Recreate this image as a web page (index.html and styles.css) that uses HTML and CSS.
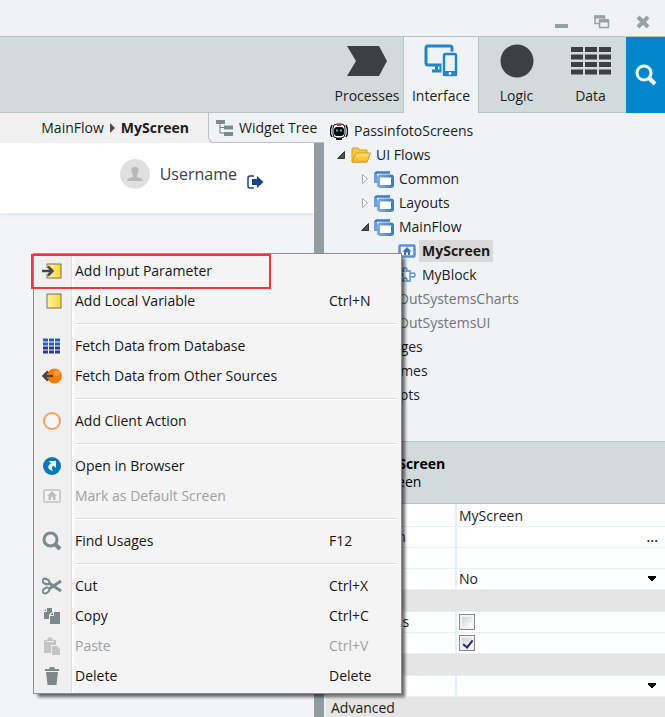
FILE: index.html
```html
<!DOCTYPE html>
<html lang="en">
<head>
<meta charset="utf-8">
<title>PassinfotoScreens</title>
<link rel="stylesheet" href="styles.css">
</head>
<body>
<svg class="defs" aria-hidden="true">
  <defs>
    <linearGradient id="blue" x1="0" x2="1" y1="0" y2="0"><stop offset="0" stop-color="#7aabe6"/><stop offset="1" stop-color="#427bc9"/></linearGradient>
    <linearGradient id="yellow" x1="0" x2="1" y1="0" y2="0"><stop offset="0" stop-color="#fff1ab"/><stop offset="1" stop-color="#fbd72d"/></linearGradient>
    <linearGradient id="folder" x1="0" x2="0" y1="0" y2="1"><stop offset="0" stop-color="#ffe27a"/><stop offset="1" stop-color="#f5b820"/></linearGradient>
    <symbol id="flow" viewBox="0 0 20 17">
      <path d="M1.500 12V3Q1.500 1.500 3 1.500H16" fill="none" stroke="#3a7cc6" stroke-width="2.500"/>
      <path d="M1.500 12V3" stroke="#6b9de0" stroke-width="3"/>
      <rect x="4.500" y="5" width="14" height="10.500" rx="1.500" fill="#fff" stroke="url(#blue)" stroke-width="3"/>
    </symbol>
    <symbol id="open" viewBox="0 0 8 8"><path d="M7.500 0.500V7.500H0.500Z" fill="#505050" stroke="#333"/></symbol>
    <symbol id="closed" viewBox="0 0 8 10"><path d="M1.500 0.500L6.500 5L1.500 9.500Z" fill="#fff" stroke="#a6a6a6"/></symbol>
  </defs>
</svg>

<header>
  <div class="titlebar">
    <button aria-label="Minimize"><svg width="14" height="14"><rect x="1" y="9" width="13" height="4" fill="#95a1a5"/></svg></button>
    <button aria-label="Restore"><svg width="16" height="14" fill="none" stroke="#95a1a5" stroke-width="1.500"><path d="M5 8.500H1V1H10.500V4"/><path d="M0 2H11M5 6H15" stroke-width="3"/><rect x="5.500" y="5" width="9" height="7.500"/></svg></button>
    <button aria-label="Close"><svg width="14" height="14"><path d="M2 2L12 12M12 2L2 12" stroke="#95a1a5" stroke-width="4"/></svg></button>
  </div>
  <nav class="toolbar">
    <button class="tab"><svg width="40" height="34"><path d="M0 2H32L40 17L32 32H0L9 17Z" fill="#394143"/></svg><span>Processes</span></button>
    <button class="tab active"><svg width="34" height="34" fill="none" stroke="#2384c6"><rect x="2" y="2" width="26" height="19" rx="2" stroke-width="3"/><path d="M12.500 22V26M17 22V26" stroke-width="3"/><path d="M8 27H19" stroke-width="3"/><rect x="20" y="10" width="12" height="21" rx="2" fill="#eff3f6" stroke="#eff3f6" stroke-width="5"/><rect x="20" y="10" width="12" height="21" rx="1.500" stroke-width="2.500"/><path d="M19 29.500H33" stroke-width="5"/><circle cx="26" cy="29.500" r="1" fill="#fff" stroke="#fff"/></svg><span>Interface</span></button>
    <button class="tab"><svg width="34" height="34"><circle cx="17" cy="17" r="16.500" fill="#394143"/></svg><span>Logic</span></button>
    <button class="tab"><svg width="40" height="34" stroke="#394143" stroke-width="5" stroke-dasharray="12 2"><path d="M0 5.500H40M0 13H40M0 20.500H40M0 28H40"/></svg><span>Data</span></button>
    <button class="search" aria-label="Search"><svg width="22" height="22" fill="none" stroke="#fff"><circle cx="9" cy="9" r="7" stroke-width="3"/><path d="M14 14L20 20" stroke-width="4"/></svg></button>
  </nav>
</header>

<main>
  <section class="editor">
    <div class="crumbs">
      <div class="path"><a href="#">MainFlow</a><svg width="5" height="10"><path d="M0 0L5 5L0 10Z" fill="#4c4c4c"/></svg><strong>MyScreen</strong></div>
      <button class="widgets"><svg width="17" height="18"><path d="M4 3V14H9M4 8.500H9" fill="none" stroke="#6f7d80"/><path d="M0 3H9M8 8.500H17M8 15H17" stroke="#7d8b8f" stroke-width="4"/></svg>Widget Tree</button>
    </div>
    <div class="canvas">
      <div class="page">
        <div class="userbar">
          <svg width="30" height="30"><circle cx="15" cy="15" r="15" fill="#e0e0e0"/><path d="M15 8C18 8 19 10 18.500 12.500Q18 15 17 16V18Q23 19 23 22H7Q7 19 13 18V16Q12 15 11.500 12.500C11 10 12 8 15 8Z" fill="#b8b8b8"/></svg>
          <span>Username</span>
          <button aria-label="Log out"><svg width="17" height="14"><path d="M7 1H3Q1 1 1 3V11Q1 13 3 13H7" fill="none" stroke="#1e4485" stroke-width="1.500"/><path d="M5 4H10V1L16.500 7L10 13V10H5Z" fill="#1e4485"/></svg></button>
        </div>
      </div>
    </div>
  </section>

  <aside>
    <div class="tree" role="tree">
      <div class="node root" role="treeitem"><svg width="18" height="18"><path d="M2 3L0.500 7V12L2 15M16 3L17.500 7V12L16 15" fill="none" stroke="#111" stroke-width="1.500"/><rect x="3" y="2" width="12" height="14" rx="4" fill="#fff" stroke="#111"/><rect x="4" y="5" width="10" height="9" rx="3" fill="#050505"/><path d="M7 2H11V4H7Z" fill="#e22d36"/><path d="M6 8.500H8M10 8.500H12" stroke="#24bed4" stroke-width="2"/><path d="M6 17H12" stroke="#111" stroke-width="2"/></svg><span>PassinfotoScreens</span></div>
      <div class="node l1" role="treeitem"><svg width="8" height="8"><use href="#open"/></svg><svg class="pic" width="20" height="16"><path d="M1 15V2Q1 1 2 1H7L9 3H16V15Z" fill="#f8cc42" stroke="#d79b1c"/><path d="M1 15L5 6H19.500L16 15Z" fill="url(#folder)" stroke="#d79b1c"/></svg><span>UI Flows</span></div>
      <div class="node l2" role="treeitem"><svg width="8" height="10"><use href="#closed"/></svg><svg class="pic" width="20" height="17"><use href="#flow"/></svg><span>Common</span></div>
      <div class="node l2" role="treeitem"><svg width="8" height="10"><use href="#closed"/></svg><svg class="pic" width="20" height="17"><use href="#flow"/></svg><span>Layouts</span></div>
      <div class="node l2" role="treeitem"><svg width="8" height="8"><use href="#open"/></svg><svg class="pic" width="20" height="17"><use href="#flow"/></svg><span>MainFlow</span></div>
      <div class="node l3" role="treeitem"><svg width="18" height="14"><rect x="1.500" y="1.500" width="15" height="11" rx="1" fill="#f4f8fd" stroke="#5b90d6" stroke-width="2.500"/><path d="M9 3L13.500 7.500H12V11H10V8.500H8V11H6V7.500H4.500Z" fill="#3c72c4"/></svg><span class="selected">MyScreen</span></div>
      <div class="node l3" role="treeitem"><svg width="18" height="16"><path d="M2 4H6Q4 1 7 1Q10 1 8.500 4H12V7Q17 4.500 17 8Q17 11.500 12 9V14H8.500Q10 11 7 11Q4 11 6 14H2V10Q5 10 5 8Q5 6 2 6Z" fill="#fff" stroke="#5590dc" stroke-width="1.500"/></svg><span class="label">MyBlock</span></div>
      <div class="node l2 muted leaf" role="treeitem"><span>OutSystemsCharts</span></div>
      <div class="node l2 muted leaf" role="treeitem"><span>OutSystemsUI</span></div>
      <div class="node branch" role="treeitem"><span>Images</span></div>
      <div class="node branch" role="treeitem"><span>Themes</span></div>
      <div class="node branch" role="treeitem"><span>Scripts</span></div>
    </div>
    <div class="propshead"><strong>MyScreen</strong><span>Screen</span></div>
    <table class="props">
      <tr><th></th><td><input type="text" value="MyScreen" aria-label="Name"></td></tr>
      <tr><th>Description</th><td class="end"><button aria-label="Edit description">...</button></td></tr>
      <tr><th></th><td><input type="text" aria-label="Title"></td></tr>
      <tr><th></th><td><select aria-label="Public"><option>No</option><option>Yes</option></select></td></tr>
      <tr class="group"><th colspan="2"></th></tr>
      <tr><th><label for="anon">Anonymous</label></th><td><input id="anon" type="checkbox"></td></tr>
      <tr><th></th><td><input type="checkbox" checked aria-label="Registered"></td></tr>
      <tr class="group"><th colspan="2"></th></tr>
      <tr><th></th><td><select aria-label="Initialize"><option></option></select></td></tr>
      <tr class="group"><th colspan="2">Advanced</th></tr>
    </table>
  </aside>

  <div class="menu" role="menu">
    <button role="menuitem" class="marked"><svg width="20" height="18"><rect x="5" y="2" width="14" height="14" fill="url(#yellow)" stroke="#77705c"/><path d="M0 9H7" stroke="#f0f0f0" stroke-width="6"/><path d="M0 9H9M6 4.500L10.500 9L6 13.500" fill="none" stroke="#4b4443" stroke-width="2.500"/></svg><span>Add Input Parameter</span></button>
    <button role="menuitem"><svg width="20" height="18"><rect x="5" y="2" width="14" height="14" fill="url(#yellow)" stroke="#77705c"/></svg><span>Add Local Variable</span><kbd>Ctrl+N</kbd></button>
    <hr>
    <button role="menuitem"><svg width="20" height="18" stroke-width="3" stroke-dasharray="5 1"><path d="M1 3H19M1 7H19" stroke="#2862b8"/><path d="M1 11H19M1 15H19" stroke="#2f359c"/></svg><span>Fetch Data from Database</span></button>
    <button role="menuitem"><svg width="20" height="18"><circle cx="12.500" cy="9" r="7.500" fill="#f77d0d"/><circle cx="15" cy="6" r="3" fill="#ffa64c" opacity=".6"/><path d="M11 9H2M6 4.500L1.500 9L6 13.500" fill="none" stroke="#4b4443" stroke-width="2.500"/></svg><span>Fetch Data from Other Sources</span></button>
    <hr>
    <button role="menuitem"><svg width="20" height="20"><circle cx="10" cy="10" r="8" fill="#f7f7f7" stroke="#f1a35d" stroke-width="2"/></svg><span>Add Client Action</span></button>
    <hr>
    <button role="menuitem"><svg width="20" height="20"><circle cx="10" cy="10" r="9" fill="#0878ba"/><path d="M7 5H14V12L11.500 9.500Q8.500 11 11 15Q5 13 6.500 10Q7 8.500 9 7.500Z" fill="#fff"/></svg><span>Open in Browser</span></button>
    <button role="menuitem" disabled><svg width="20" height="18"><rect x="2" y="3" width="16" height="12" rx="1" fill="#f4f4f4" stroke="#cdcdcd" stroke-width="2"/><path d="M10 4L15 9H13.500V13H11V10H9V13H6.500V9H5Z" fill="#bdbdbd"/></svg><span>Mark as Default Screen</span></button>
    <hr>
    <button role="menuitem"><svg width="20" height="20" fill="none" stroke="#7b898c"><circle cx="8.500" cy="8.500" r="6.500" stroke-width="3"/><path d="M13 13L18 18" stroke-width="4"/></svg><span>Find Usages</span><kbd>F12</kbd></button>
    <hr>
    <button role="menuitem"><svg width="20" height="18" fill="none" stroke="#7b898c" stroke-width="2"><ellipse cx="4" cy="4.500" rx="3.500" ry="2.500" transform="rotate(25 4 4.500)"/><ellipse cx="4" cy="13.500" rx="3.500" ry="2.500" transform="rotate(-35 4 13.500)"/><path d="M7 6L19 14M7 12L19 4" stroke-width="3"/></svg><span>Cut</span><kbd>Ctrl+X</kbd></button>
    <button role="menuitem"><svg width="20" height="18" fill="#7b898c"><path d="M5 1H10V6H8V12H2V5H5ZM2 4L4 2V4Z"/><path d="M12 5H18V17H8V9H12ZM8 8L11 5V8Z"/><path d="M7.500 13V8L11.500 4" fill="none" stroke="#f0f0f0"/></svg><span>Copy</span><kbd>Ctrl+C</kbd></button>
    <button role="menuitem" disabled><svg width="20" height="20" fill="#c4c4c4"><path d="M2 4H5Q6 1 8 1Q10 1 11 4H14V9H9V17H2Z"/><path d="M4 5.500H12" stroke="#f0f0f0"/><path d="M10 10H15L18 13V19H10Z"/></svg><span>Paste</span><kbd>Ctrl+V</kbd></button>
    <button role="menuitem"><svg width="20" height="20" fill="#7b898c"><path d="M3 3H7L8 1H12L13 3H17V5H3ZM4 6H16L14.500 19H5.500Z"/></svg><span>Delete</span><kbd>Delete</kbd></button>
  </div>
</main>
</body>
</html>
```
FILE: styles.css
```css
*, ::before, ::after { box-sizing: border-box; }
body {
  margin: 0;
  min-height: 100vh;
  display: flex;
  flex-direction: column;
  overflow: hidden;
  background: #eff3f6;
  color: #1c1c1c;
  font: 14px/20px "Open Sans", "Noto Sans", sans-serif;
}
button, input, select { font: inherit; color: inherit; }
button { border: 0; padding: 0; background: none; }
svg { flex: none; display: block; }
.defs { position: absolute; width: 0; height: 0; }

.titlebar {
  height: 36px;
  display: flex;
  justify-content: flex-end;
  align-items: flex-end;
  gap: 26px;
  padding: 0 15px 7px 0;
}
.toolbar {
  display: flex;
  justify-content: flex-end;
  height: 77px;
  border-top: 1px solid #b9c2c5;
  background: #d3dadc;
  box-shadow: inset 0 -1px #b9c2c5;
}
.tab {
  width: 74px;
  padding-top: 7px;
  display: flex;
  flex-direction: column;
  align-items: center;
  gap: 8px;
  border-bottom: 1px solid #b9c2c5;
  white-space: nowrap;
}
.tab.active {
  background: #eff3f6;
  border-bottom-color: #eff3f6;
  box-shadow: -1px 0 #b9c2c5, 1px 0 #b9c2c5;
}
.active ~ .tab { padding-left: 3px; }
.search {
  width: 39px;
  display: flex;
  align-items: center;
  justify-content: center;
  background: #0287cd;
}

main { position: relative; flex: 1; display: flex; }
.editor { flex: 1; display: flex; flex-direction: column; }
.crumbs { display: flex; height: 30px; background: #f0f0f0; }
.path {
  flex: 1;
  display: flex;
  align-items: center;
  justify-content: flex-end;
  gap: 6px;
  padding-right: 19px;
}
.path a { color: inherit; text-decoration: none; }
.widgets {
  width: 116px;
  display: flex;
  align-items: center;
  gap: 6px;
  padding-left: 7px;
  background: #eff3f6;
  border: solid #b9c2c5;
  border-width: 0 0 1px 1px;
  border-bottom-left-radius: 6px;
  white-space: nowrap;
}
.canvas { flex: 1; background: #f1f5f8; border-right: 10px solid #929da1; }
.page {
  height: 70px;
  padding: 16px 50px;
  background: #fff;
  box-shadow: 0 1px 4px #d8dcdf;
  clip-path: inset(0 0 -8px 0);
}
.userbar {
  display: flex;
  justify-content: flex-end;
  align-items: center;
  gap: 10px;
  font-size: 16px;
  color: #3b4045;
}
.userbar button { padding-top: 16px; }

aside { width: 341px; display: flex; flex-direction: column; }
.tree { height: 328px; padding-top: 6px; }
.node { display: flex; align-items: center; height: 24px; white-space: nowrap; }
.root { padding-left: 6px; gap: 6px; }
.l1 { padding-left: 13px; }
.l2 { padding-left: 37px; }
.pic { margin: 0 5px 0 6px; }
.l2 .pic { margin-left: 5px; }
.l3 { padding-left: 74px; gap: 3px; }
.leaf { padding-left: 74px; }
.branch { padding-left: 52px; }
.muted { color: #737373; }
.selected { padding: 1px 3px; background: #d9d9d9; font-weight: 700; }
.label { padding: 0 3px; }

.propshead {
  display: flex;
  flex-direction: column;
  justify-content: center;
  height: 63px;
  padding-left: 53px;
  border: solid #b9c2c5;
  border-width: 1px 0;
  background: #d3dadc;
  color: #000;
  line-height: 18px;
}
.props {
  width: 100%;
  table-layout: fixed;
  border-collapse: collapse;
  background: #fff;
  border-top: 2px solid #fff;
  border-left: 2px solid #eff3f6;
}
.props tr { height: 21px; border-bottom: 1px solid #e3f1f7; }
.props th {
  width: 131px;
  padding: 0 0 0 5px;
  text-align: left;
  font-weight: 400;
  line-height: 20px;
  border-right: 2px solid #e3f1f7;
}
.props td { padding: 0 5px 0 2px; line-height: 20px; }
.props input[type="text"], .props select {
  display: block;
  width: 100%;
  height: 20px;
  padding: 0;
  border: 0;
  background: none;
}
.props select {
  appearance: none;
  background: conic-gradient(from -40deg at 50% 100%, #000 80deg, transparent 0) no-repeat right 4px center / 8px 6px;
}
.props .end { text-align: right; }
.props .end button { display: block; margin-left: auto; height: 20px; padding-right: 2px; font-weight: 600; }
.props .group { height: 22px; background: #e5e5e5; }
.props .group th { border-right: 0; }
.props input[type="checkbox"] {
  appearance: none;
  display: block;
  width: 16px;
  height: 16px;
  margin: 0;
  border: 1px solid #888;
  background: linear-gradient(135deg, #cfd2da, #fff) content-box, #f2f2f2;
  padding: 2px;
}
.props input[type="checkbox"]:checked::after {
  content: "";
  display: block;
  width: 6px;
  height: 10px;
  margin: 0 3px;
  border: solid #27277b;
  border-width: 0 2px 2px 0;
  transform: rotate(38deg);
}

.menu {
  position: absolute;
  left: 33px;
  top: 140px;
  width: 369px;
  padding: 2px;
  display: flex;
  flex-direction: column;
  border: 1px solid #8e8e8e;
  background: linear-gradient(90deg, #f0f0f0 37px, #e0e0e0 37px 38px, #fff 38px 40px, #f4f4f4 40px);
  box-shadow: 4px 4px 3px -1px rgba(0, 0, 0, .6);
  color: #161616;
}
.menu button {
  position: relative;
  display: flex;
  align-items: center;
  height: 30px;
  padding-left: 6px;
  text-align: left;
}
.menu button span { flex: 1; padding-left: 13px; }
.menu kbd { width: 70px; font: inherit; }
.menu button:disabled { color: #a0a0a0; }
.menu hr {
  width: 322px;
  height: 2px;
  margin: 7px 2px 6px auto;
  border: 0;
  background: linear-gradient(#dedede 50%, #fff 50%);
}
.marked::before {
  content: "";
  position: absolute;
  left: -5px;
  top: -2px;
  width: 240px;
  height: 35px;
  border: 2px solid #e93b3b;
}
```
